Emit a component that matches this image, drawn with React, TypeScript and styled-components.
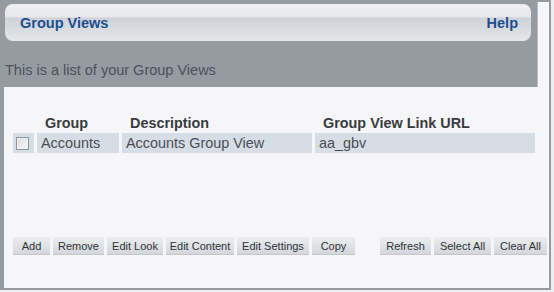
import styled, { createGlobalStyle } from 'styled-components'

const GlobalStyle = createGlobalStyle`
  html, body {
    margin: 0;
    padding: 0;
    background: #eceef1;
  }
  body {
    font-family: "Liberation Sans", Arial, sans-serif;
  }
`

const leftButtons = [
  {label: 'Add', width: 37},
  {label: 'Remove', width: 51},
  {label: 'Edit Look', width: 56},
  {label: 'Edit Content', width: 68},
  {label: 'Edit Settings', width: 72},
  {label: 'Copy', width: 43},
]

const rightButtons = [
  {label: 'Refresh', width: 51},
  {label: 'Select All', width: 57},
  {label: 'Clear All', width: 53},
]

const rows = [
  {group: 'Accounts', description: 'Accounts Group View', url: 'aa_gbv'},
]


export default function App() {
  return (
    <>
      <GlobalStyle />
      <Frame>
        <Top>
          <TopMain>
            <TitleBar>
              <Title>Group Views</Title>
              <HelpLink>Help</HelpLink>
            </TitleBar>
            <Intro>This is a list of your Group Views</Intro>
          </TopMain>
          <SideStrip />
        </Top>

        <Panel>
          <Grid>
            <span />
            <HeadCell>Group</HeadCell>
            <HeadCell>Description</HeadCell>
            <HeadCell>Group View Link URL</HeadCell>

            {rows.map(row => (
              <Row key={row.url}>
                <CheckCell><Check type="checkbox" /></CheckCell>
                <Cell>{row.group}</Cell>
                <Cell>{row.description}</Cell>
                <Cell>{row.url}</Cell>
              </Row>
            ))}
          </Grid>

          <Toolbar>
            <ButtonGroup>
              {leftButtons.map(b => (
                <ActionButton key={b.label} $width={b.width}>{b.label}</ActionButton>
              ))}
            </ButtonGroup>
            <ButtonGroup>
              {rightButtons.map(b => (
                <ActionButton key={b.label} $width={b.width}>{b.label}</ActionButton>
              ))}
            </ButtonGroup>
          </Toolbar>
        </Panel>
      </Frame>
    </>
  )
}

const Frame = styled.div`
  width: 551px;
  height: 290px;
  box-sizing: border-box;
  padding: 0 2px 2px 4px;
  background: #969ba2;
  display: flex;
  flex-direction: column;
`

const Top = styled.div`
  display: flex;
`

const TopMain = styled.div`
  flex: 1;
  padding-left: 1px;
`

const SideStrip = styled.div`
  flex: 0 0 11px;
  margin-top: 2px;
  background: #f6f6f8;
  border-left: 1px solid #b9bdc2;
`

const TitleBar = styled.div`
  margin: 4px 6px 0 0;
  height: 37px;
  box-sizing: border-box;
  padding: 0 13px 0 15px;
  border-radius: 8px;
  display: flex;
  align-items: center;
  justify-content: space-between;
  background: linear-gradient(#eff0f2 0%, #e6e8eb 34%, #cfd2d7 38%, #d7dade 65%, #e6e8eb 100%);
`

const Title = styled.span`
  font-size: 14.5px;
  font-weight: bold;
  color: #1c4f90;
`

const HelpLink = styled(Title)`
  cursor: pointer;
`

const Intro = styled.div`
  margin: 21px 0 9px;
  font-size: 14.5px;
  line-height: 16px;
  color: #4b5158;
`

const Panel = styled.div`
  flex: 1;
  background: #f6f6f8;
  padding: 28px 2px 33px 9px;
  display: flex;
  flex-direction: column;
  justify-content: space-between;
`

const Grid = styled.div`
  display: grid;
  grid-template-columns: 21px 82px 190px 220px;
  column-gap: 3px;
  row-gap: 1px;
`

const HeadCell = styled.div`
  padding-left: 8px;
  font-size: 14.4px;
  line-height: 17px;
  font-weight: bold;
  color: #383b40;
  white-space: nowrap;
`

const Row = styled.div`
  display: contents;
`

const Cell = styled.div`
  height: 20px;
  line-height: 20px;
  padding-left: 4px;
  background: #d7dde5;
  font-size: 14.4px;
  color: #4a4e54;
  white-space: nowrap;
`

const CheckCell = styled(Cell)`
  padding-left: 3px;
  display: flex;
  align-items: center;
`

const Check = styled.input`
  appearance: none;
  margin: 0;
  width: 13px;
  height: 13px;
  box-sizing: border-box;
  border: 1px solid #8f959c;
  background: linear-gradient(135deg, #dcdde0, #f7f7f8);
  box-shadow: inset 0 0 0 1px #eef0f2;
`

const Toolbar = styled.div`
  display: flex;
  justify-content: space-between;
`

const ButtonGroup = styled.div`
  display: flex;
  gap: 3px;
`

const ActionButton = styled.button<{ $width: number }>`
  width: ${p => p.$width}px;
  height: 18px;
  padding: 0;
  border: none;
  border-bottom: 1px solid #c3c7cc;
  background: linear-gradient(#eceef0, #d3d6db);
  font-family: "Liberation Sans", Arial, sans-serif;
  font-size: 11px;
  color: #2f3338;
  text-align: center;
  cursor: pointer;
`
